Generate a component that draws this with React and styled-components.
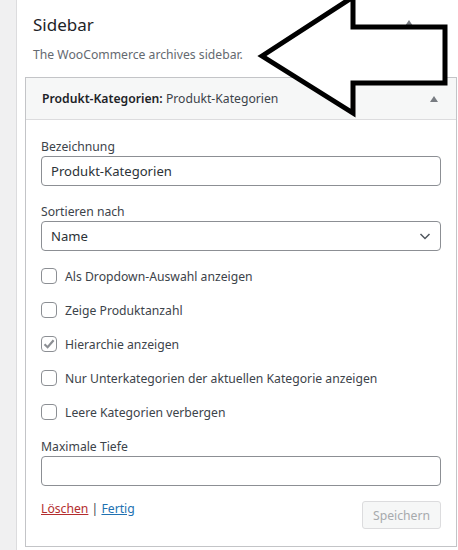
import React from "react"
import styled, { createGlobalStyle } from "styled-components"

const GlobalStyle = createGlobalStyle`
  html, body {
    margin: 0;
    padding: 0;
    background: #fff;
  }
  body {
    font-family: "Noto Sans", "Liberation Sans", sans-serif;
    color: #3c434a;
  }
`

const Page = styled.div`
  position: relative;
  display: flex;
  width: 458px;
  height: 550px;
  overflow: hidden;
`
const LeftStrip = styled.div`
  width: 16px;
  background: #f0f0f1;
  border-right: 1px solid #dcdcde;
  flex-shrink: 0;
`
const Main = styled.div`
  flex: 1;
  padding: 0 1px 0 8px;
  display: flex;
  flex-direction: column;
`
const SidebarHead = styled.div`
  padding: 11px 0 0 8px;
  height: 77px;
  box-sizing: border-box;
`
const TitleRow = styled.div`
  display: flex;
  align-items: center;
  justify-content: space-between;
  padding-right: 44px;
`
const SidebarTitle = styled.h2`
  margin: 0;
  font-size: 17px;
  font-weight: 400;
  line-height: 28px;
  color: #1d2327;
`
const Toggle = styled.span`
  width: 0;
  height: 0;
  border-left: 4px solid transparent;
  border-right: 4px solid transparent;
  border-bottom: 6px solid #787c82;
  margin-top: ${p => p.$lift ? -p.$lift * 2 : 0}px;
`
const Description = styled.p`
  margin: 6px 0 0;
  font-size: 12.2px;
  line-height: 20px;
  color: #646970;
`
const WidgetBox = styled.div`
  border: 1px solid #c3c4c7;
  background: #fff;
`
const WidgetHeader = styled.div`
  height: 42px;
  box-sizing: border-box;
  background: #f6f7f7;
  border-bottom: 1px solid #dcdcde;
  display: flex;
  align-items: center;
  justify-content: space-between;
  padding: 0 18px 0 16px;
`
const WidgetTitle = styled.h3`
  margin: 0;
  font-size: 12.2px;
  font-weight: 600;
  color: #1d2327;
  & span {
    font-weight: 400;
    color: #3c434a;
  }
`
const WidgetBody = styled.div`
  padding: 17px 15px 16px;
  display: flex;
  flex-direction: column;
`
const Label = styled.label`
  display: block;
  font-size: 12.2px;
  line-height: 19px;
  color: #3c434a;
`
const TextInput = styled.input`
  display: block;
  width: 100%;
  height: 30px;
  box-sizing: border-box;
  border: 1px solid #8c8f94;
  border-radius: 4px;
  padding: 0 9px;
  font-family: inherit;
  font-size: 13.1px;
  color: #2c3338;
  background: #fff;
  margin-bottom: ${p => p.$gap || 0}px;
`
const SelectBox = styled.div`
  display: flex;
  align-items: center;
  justify-content: space-between;
  height: 30px;
  box-sizing: border-box;
  border: 1px solid #8c8f94;
  border-radius: 4px;
  padding: 0 8px 0 9px;
  font-size: 13.1px;
  color: #2c3338;
  margin-bottom: 8px;
`
const CheckRow = styled.div`
  display: flex;
  align-items: center;
  gap: 8px;
  height: 34px;
  font-size: 12.2px;
  color: #3c434a;
`
const Box = styled.span`
  width: 16px;
  height: 16px;
  box-sizing: border-box;
  border: 1px solid #8c8f94;
  border-radius: 4px;
  background: #fff;
  display: flex;
  align-items: center;
  justify-content: center;
  flex-shrink: 0;
`
const FieldGroup = styled.div`
  margin-top: ${p => p.$top || 0}px;
`
const Actions = styled.div`
  margin-top: 14px;
  display: flex;
  align-items: center;
  justify-content: space-between;
`
const Links = styled.div`
  font-size: 12.2px;
  color: #3c434a;
  padding-bottom: 13px;
`
const Link = styled.a`
  color: ${p => p.$danger ? "#b32d2e" : "#2271b1"};
  text-decoration: underline;
  cursor: pointer;
`
const SaveButton = styled.button`
  height: 28px;
  padding: 0 10px;
  font-family: inherit;
  font-size: 12.2px;
  color: #a7aaad;
  background: #f6f7f7;
  border: 1px solid #dcdcde;
  border-radius: 3px;
`
const Arrow = styled.svg`
  position: absolute;
  left: 0;
  top: 0;
  pointer-events: none;
`

const options = [
  { label: "Als Dropdown-Auswahl anzeigen", checked: false },
  { label: "Zeige Produktanzahl", checked: false },
  { label: "Hierarchie anzeigen", checked: true },
  { label: "Nur Unterkategorien der aktuellen Kategorie anzeigen", checked: false },
  { label: "Leere Kategorien verbergen", checked: false },
]

function Check ({ label, checked }) {
  return (
    <CheckRow>
      <Box>
        {checked && (
          <svg width="14" height="14" viewBox="0 0 14 14">
            <path d="M2.5 7.2 L5.6 10.2 L11.6 3.2" fill="none" stroke="#8c8f94" strokeWidth="2.2" />
          </svg>
        )}
      </Box>
      {label}
    </CheckRow>
  )
}

export default function App () {
  return (
    <Page>
      <GlobalStyle />
      <LeftStrip />
      <Main>
        <SidebarHead>
          <TitleRow>
            <SidebarTitle>Sidebar</SidebarTitle>
            <Toggle $lift={2} />
          </TitleRow>
          <Description>The WooCommerce archives sidebar.</Description>
        </SidebarHead>
        <WidgetBox>
          <WidgetHeader>
            <WidgetTitle>Produkt-Kategorien:<span> Produkt-Kategorien</span></WidgetTitle>
            <Toggle />
          </WidgetHeader>
          <WidgetBody>
            <Label>Bezeichnung</Label>
            <TextInput defaultValue="Produkt-Kategorien" $gap={16} />
            <Label>Sortieren nach</Label>
            <SelectBox>
              Name
              <svg width="14" height="14" viewBox="0 0 14 14">
                <path d="M2.5 5 L7 9.5 L11.5 5" fill="none" stroke="#50575e" strokeWidth="1.5" />
              </svg>
            </SelectBox>
            {options.map(o => <Check key={o.label} {...o} />)}
            <FieldGroup $top={8}>
              <Label>Maximale Tiefe</Label>
              <TextInput />
            </FieldGroup>
            <Actions>
              <Links>
                <Link $danger>Löschen</Link> | <Link>Fertig</Link>
              </Links>
              <SaveButton disabled>Speichern</SaveButton>
            </Actions>
          </WidgetBody>
        </WidgetBox>
      </Main>
      <Arrow width="458" height="130" viewBox="0 0 458 130">
        <polygon
          points="262,56 353,-3 353,27 445,27 445,83 353,83 353,113"
          fill="#fff"
          stroke="#000"
          strokeWidth="5"
          strokeLinejoin="miter"
        />
      </Arrow>
    </Page>
  )
}
